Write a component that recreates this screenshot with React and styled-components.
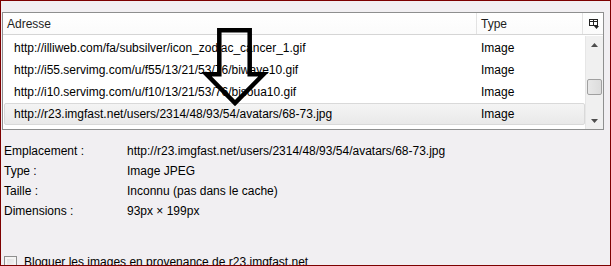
import React from "react";
import styled, { createGlobalStyle } from "styled-components";

const Global = createGlobalStyle`
  html, body { margin: 0; padding: 0; background: #f1eff2; }
  body { font-family: "Liberation Sans", Arial, sans-serif; font-size: 12px; color: #000; }
`;

const Frame = styled.div`
  position: relative;
  box-sizing: border-box;
  width: 611px;
  height: 266px;
  border: 1px solid #7d0000;
  padding: 11px 6px 0 1px;
  overflow: hidden;
  background: #f1eff2;
`;

const ListBox = styled.div`
  box-sizing: border-box;
  width: 602px;
  height: 118px;
  border: 1px solid #8e8f8f;
  background: #ffffff;
  display: flex;
  flex-direction: column;
`;

const Header = styled.div`
  display: grid;
  grid-template-columns: 474px 106px 1fr;
  height: 21px;
  border-bottom: 1px solid #d5d5d5;
  background: linear-gradient(#ffffff, #fbfbfb);
`;

const HeadCell = styled.div`
  display: flex;
  align-items: center;
  padding-left: ${(p) => p.$pad || 4}px;
  border-right: ${(p) => (p.$sep ? "1px solid #e3e3e3" : "none")};
  color: #1e1e1e;
`;

const PickerCell = styled.div`
  display: flex;
  align-items: center;
  justify-content: center;
  padding-left: 2px;
`;

const Body = styled.div`
  flex: 1;
  display: grid;
  grid-template-columns: 1fr 18px;
`;

const Rows = styled.div`
  padding: 2px 0 0 1px;
  display: flex;
  flex-direction: column;
`;

const Row = styled.div`
  box-sizing: border-box;
  height: 22px;
  display: grid;
  grid-template-columns: 474px 1fr;
  align-items: center;
  border: 1px solid ${(p) => (p.$sel ? "#d9d9d9" : "transparent")};
  border-radius: 2px;
  background: ${(p) => (p.$sel ? "linear-gradient(#f4f4f4, #e9e9e9)" : "transparent")};
`;

const Cell = styled.div`
  padding-left: ${(p) => p.$pad}px;
  white-space: nowrap;
  overflow: hidden;
`;

const Scrollbar = styled.div`
  display: grid;
  grid-template-rows: 17px 1fr 17px;
  background: #f0f0f0;
  border-left: 1px solid #e6e6e6;
  margin-top: 1px;
`;

const ScrollBtn = styled.div`
  display: flex;
  align-items: center;
  justify-content: center;
`;

const Track = styled.div`
  position: relative;
  padding-top: 26px;
  display: flex;
  justify-content: center;
`;

const Thumb = styled.div`
  box-sizing: border-box;
  width: 15px;
  height: 16px;
  border: 1px solid #a0a0a0;
  border-radius: 2px;
  background: linear-gradient(90deg, #e8e8e8, #dcdcdc);
`;

const Details = styled.div`
  display: grid;
  grid-template-columns: 123px 1fr;
  grid-auto-rows: 20px;
  align-items: center;
  padding: 11px 0 0 2px;
`;

const Label = styled.div`
  color: #000;
`;

const Value = styled.div`
  color: #000;
  white-space: nowrap;
`;

const CheckRow = styled.div`
  display: flex;
  align-items: center;
  gap: 7px;
  padding: 34px 0 0 2px;
`;

const Box = styled.div`
  box-sizing: border-box;
  width: 13px;
  height: 13px;
  border: 1px solid #8f8f8f;
  background: linear-gradient(135deg, #dcdcdc, #f8f8f8);
  box-shadow: inset 0 0 0 2px #f4f4f4;
`;

const Overlay = styled.svg`
  position: absolute;
  left: 0;
  top: 0;
  pointer-events: none;
`;

const rows = [
  "http://illiweb.com/fa/subsilver/icon_zodiac_cancer_1.gif",
  "http://i55.servimg.com/u/f55/13/21/53/76/biwave10.gif",
  "http://i10.servimg.com/u/f10/13/21/53/76/bisoua10.gif",
  "http://r23.imgfast.net/users/2314/48/93/54/avatars/68-73.jpg",
];

const details = [
  ["Emplacement :", "http://r23.imgfast.net/users/2314/48/93/54/avatars/68-73.jpg"],
  ["Type :", "Image JPEG"],
  ["Taille :", "Inconnu (pas dans le cache)"],
  ["Dimensions :", "93px × 199px"],
];

export default function App() {
  return (
    <>
      <Global />
      <Frame>
        <ListBox>
          <Header>
            <HeadCell $sep $pad={4}>Adresse</HeadCell>
            <HeadCell $sep $pad={4}>Type</HeadCell>
            <PickerCell>
              <svg width="10" height="10" viewBox="0 0 10 10">
                <rect x="0.5" y="0.5" width="8" height="6" fill="none" stroke="#222" />
                <line x1="0.5" y1="2.5" x2="8.5" y2="2.5" stroke="#222" />
                <line x1="4.5" y1="0.5" x2="4.5" y2="6.5" stroke="#222" />
                <path d="M5 7 L10 7 L7.5 10 Z" fill="#222" />
              </svg>
            </PickerCell>
          </Header>
          <Body>
            <Rows>
              {rows.map((r, i) => (
                <Row key={i} $sel={i === 3}>
                  <Cell $pad={9}>{r}</Cell>
                  <Cell $pad={2}>Image</Cell>
                </Row>
              ))}
            </Rows>
            <Scrollbar>
              <ScrollBtn>
                <svg width="7" height="4" viewBox="0 0 7 4">
                  <path d="M0 4 L3.5 0 L7 4 Z" fill="#4d4d4d" />
                </svg>
              </ScrollBtn>
              <Track>
                <Thumb />
              </Track>
              <ScrollBtn>
                <svg width="7" height="4" viewBox="0 0 7 4">
                  <path d="M0 0 L7 0 L3.5 4 Z" fill="#4d4d4d" />
                </svg>
              </ScrollBtn>
            </Scrollbar>
          </Body>
        </ListBox>
        <Details>
          {details.map(([l, v]) => (
            <React.Fragment key={l}>
              <Label>{l}</Label>
              <Value>{v}</Value>
            </React.Fragment>
          ))}
        </Details>
        <CheckRow>
          <Box />
          <span>Bloquer les images en provenance de r23.imgfast.net</span>
        </CheckRow>
        <Overlay width="611" height="266" viewBox="0 0 611 266">
          <polygon
            points="218.3,29.3 248.7,29.3 248.7,73.3 262.5,73.3 234,102 205.5,73.3 218.3,73.3"
            fill="none"
            stroke="#000"
            strokeWidth="4.5"
            strokeLinejoin="miter"
          />
        </Overlay>
      </Frame>
    </>
  );
}
